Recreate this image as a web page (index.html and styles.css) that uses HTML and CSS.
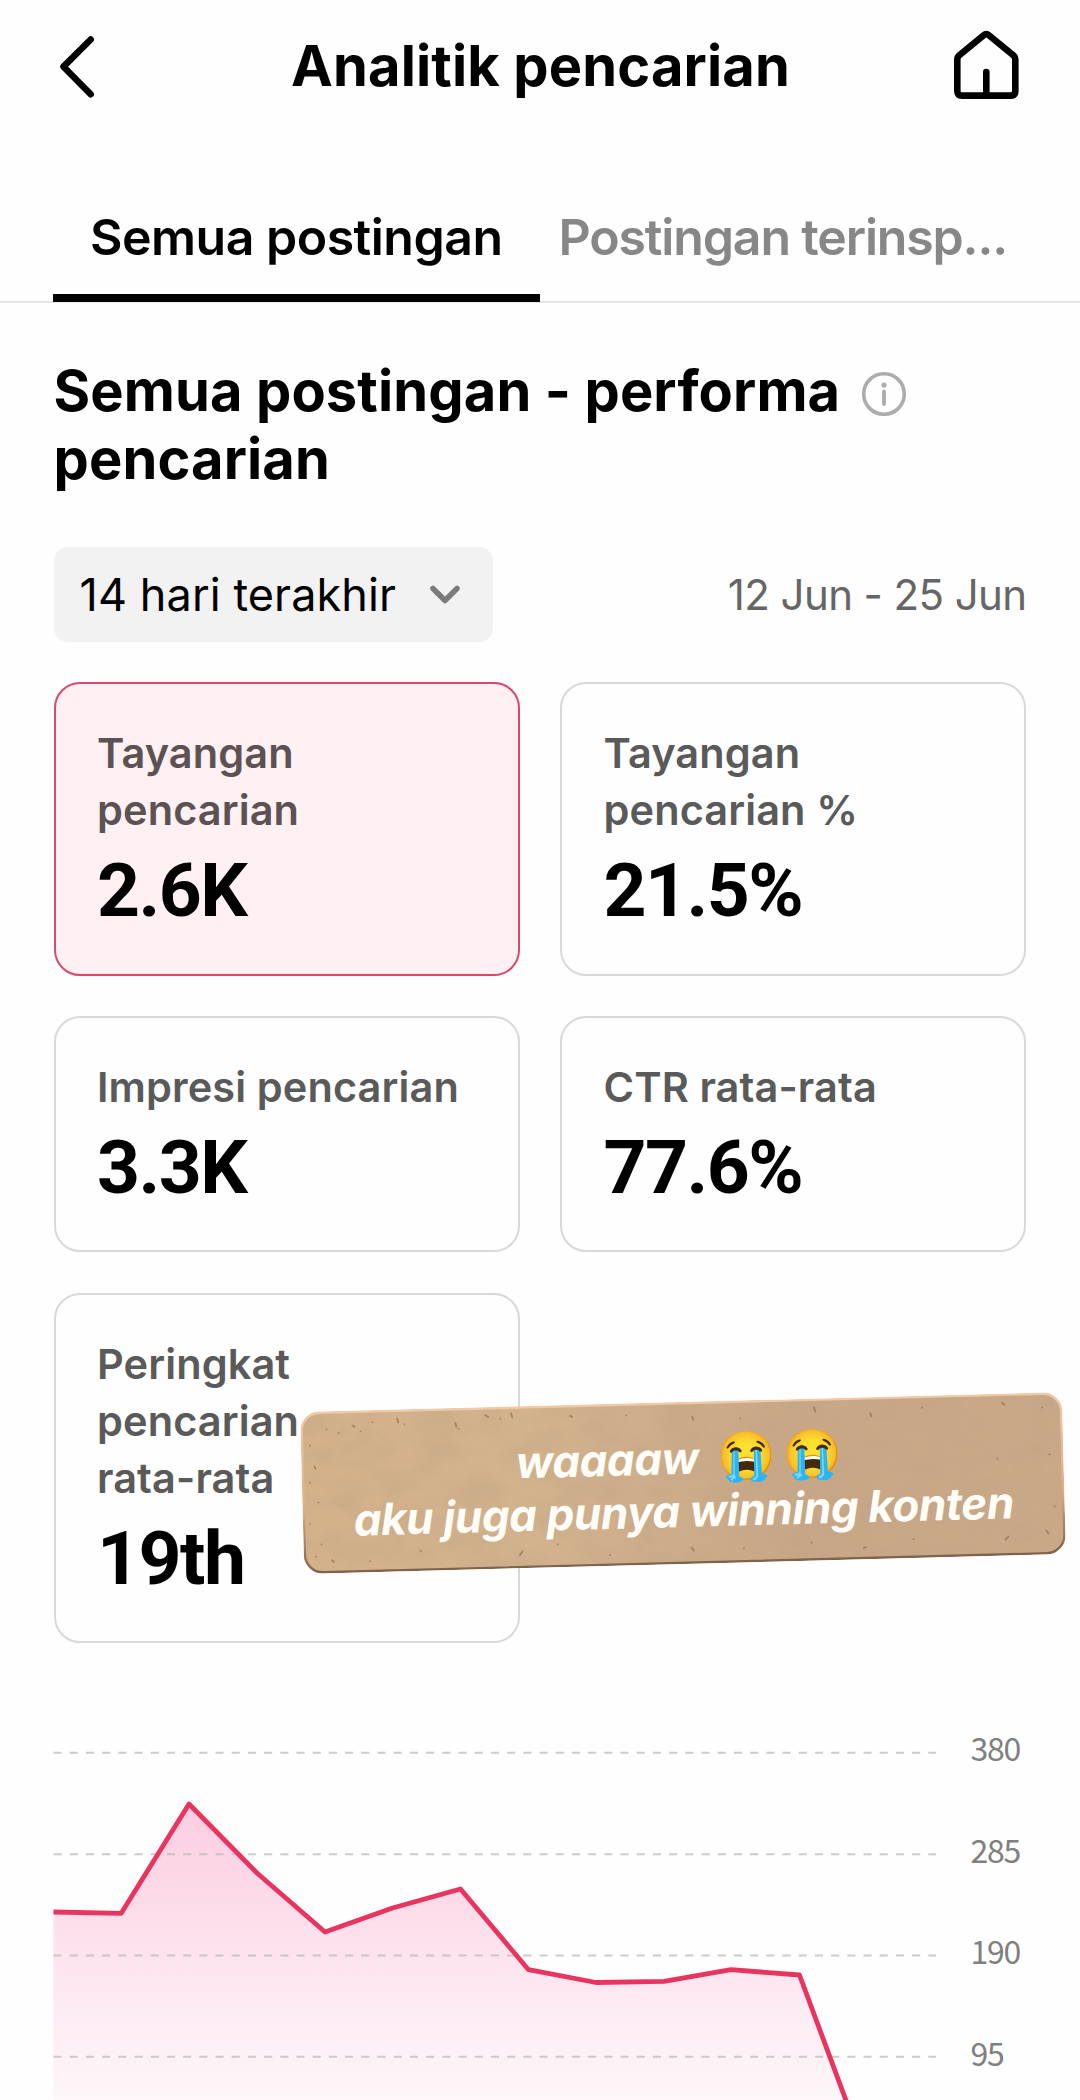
FILE: index.html
```
<!DOCTYPE html>
<html lang="id">
<head>
<meta charset="utf-8">
<title>Analitik pencarian</title>
<link rel="stylesheet" href="styles.css">
</head>
<body>
<header class="header">
  <svg class="header-icon" viewBox="0 0 80 80" fill="none" stroke="#000" stroke-width="6.6" stroke-linecap="round" stroke-linejoin="round"><path d="M54.700 13.500 27.500 40.700 54.700 68.200"/></svg>
  <h1 class="header-title">Analitik pencarian</h1>
  <svg class="header-icon" viewBox="0 0 80 80" fill="none" stroke="#000" stroke-width="6.6" stroke-linejoin="round"><path d="M42.900 9.300Q40.300 7.100 37.700 9.300L13.300 29.200Q11.300 30.900 11.300 33.500V65Q11.300 69.600 16.100 69.600H64.500Q69.300 69.600 69.300 65V33.500Q69.300 30.900 67.300 29.200Z"/><path d="M40.300 46V69" stroke-linecap="round"/></svg>
</header>
<nav class="tabs">
  <span class="tab tab-active">Semua postingan</span>
  <span class="tab tab-clipped">Postingan terinsp...</span>
</nav>
<main class="content">
  <h2 class="section-title">Semua postingan - performa
    <svg class="info" viewBox="0 0 46 46"><circle cx="23" cy="23" r="20.3" fill="none" stroke="#acacac" stroke-width="3.6"/><circle cx="23" cy="14" r="2.6" fill="#acacac"/><path d="M23 20.500V33" stroke="#acacac" stroke-width="3.8" stroke-linecap="round"/></svg><br>pencarian</h2>
  <div class="filters">
    <button class="period">14 hari terakhir
      <svg class="caret" viewBox="0 0 32 22" fill="none" stroke="#7b7b7b" stroke-width="5.5" stroke-linecap="round" stroke-linejoin="round"><path d="M4 4.500 16 16.500 28 4.500"/></svg>
    </button>
    <span class="dates">12 Jun - 25 Jun</span>
  </div>
  <section class="metrics">
    <article class="metric metric-selected"><span class="label">Tayangan pencarian</span><strong class="value">2.6K</strong></article>
    <article class="metric"><span class="label">Tayangan pencarian %</span><strong class="value">21.5%</strong></article>
    <article class="metric"><span class="label">Impresi pencarian</span><strong class="value">3.3K</strong></article>
    <article class="metric"><span class="label">CTR rata-rata</span><strong class="value">77.6%</strong></article>
    <article class="metric"><span class="label">Peringkat pencarian rata-rata</span><strong class="value">19th</strong></article>
  </section>
</main>
<svg class="chart" viewBox="0 1643 1080 457">
  <defs>
    <linearGradient id="area" gradientUnits="userSpaceOnUse" x1="0" y1="1804" x2="0" y2="2140">
      <stop offset="0" stop-color="#fbcde1"/><stop offset=".3" stop-color="#fddce9"/><stop offset=".6" stop-color="#fdebf3"/><stop offset="1" stop-color="#fffbfc"/>
    </linearGradient>
  </defs>
  <path fill="url(#area)" d="M53.500 1912 121.200 1913.300 189 1804.500 257 1873 325 1932 392.500 1908 460.500 1889 528.500 1969.700 596 1982.500 664 1981.300 731 1969.700 799.500 1975 864 2149H53.500Z"/>
  <g class="grid">
    <path d="M53.500 1752.700H936M53.500 1854.200H936M53.500 1955.500H936M53.500 2056.800H936"/>
  </g>
  <path class="line" d="M53.500 1912 121.200 1913.300 189 1804 257 1873 325 1932 392.500 1908 460.500 1889 528.500 1969.700 596 1982.500 664 1981.300 731 1969.700 799.500 1975 864 2149"/>
  <g class="ticks">
    <text x="970.500" y="1760.700">380</text><text x="970.500" y="1862.500">285</text><text x="970.500" y="1963.500">190</text><text x="970.500" y="2065.500">95</text>
  </g>
</svg>
<aside class="sticker">
  <svg class="paper" viewBox="0 0 762 162">
    <defs>
      <linearGradient id="kraft" x1="0" y1="0" x2="1" y2="0"><stop offset="0" stop-color="#d2b18b"/><stop offset=".3" stop-color="#d3b38e"/><stop offset=".65" stop-color="#c8a787"/><stop offset="1" stop-color="#caa988"/></linearGradient>
      <linearGradient id="rim" x1="0" y1="0" x2="0" y2="1"><stop offset="0" stop-color="#f3c8a6"/><stop offset=".6" stop-color="#dfae87"/><stop offset="1" stop-color="#80634c"/></linearGradient>
      <filter id="grain" x="0" y="0" width="1" height="1"><feTurbulence type="fractalNoise" baseFrequency=".025 .04" numOctaves="4" seed="4"/><feColorMatrix values="0 0 0 0 .5  0 0 0 0 .36  0 0 0 0 .22  .7 0 0 0 -.24"/><feComposite in2="SourceGraphic" operator="in"/></filter>
    </defs>
    <rect x="1" y="1" width="760" height="160" rx="18" fill="url(#kraft)"/>
    <rect x="1" y="1" width="760" height="160" rx="18" filter="url(#grain)"/>
    <rect x="1.200" y="1.200" width="759.600" height="159.600" rx="18" fill="none" stroke="url(#rim)" stroke-width="2.400"/>
    <g fill="none" stroke="#84664c" stroke-opacity=".6" stroke-width="1.800" stroke-linecap="round">
      <path d="M26 18h.1M38 22h.1M52 15l2 1M60 21h.1M72 12h.1M97 9l1 4M104 15h.1M155 15l1 4M158 21h.1M185 8l3 2M200 12h.1M211 7l1 4M270 11l2 1M326 12h.1M392 15l1 3M440 18h.1M514 9l1 4M570 16l1 3M622 12h.1M702 9l2 2M742 15h.1M9 34h.1M13 55l1 2M8 71h.1M16 91h.1M7 112h.1M18 133h.1M12 145h.1M28 149l2 2M66 151h.1M117 142h.1M219 145l-3 4M254 139h.1M306 151h.1M388 146l2 3M440 148h.1M508 144h.1M560 151l2-1M610 143h.1M702 146l3-3M743 138l2 3M752 114h.1M748 62h.1M696 65h.1M660 114h.1"/>
    </g>
  </svg>
  <p class="caption">waaaaw <span class="emoji">😭😭</span><br>aku juga punya winning konten</p>
</aside>
</body>
</html>
```
FILE: styles.css
```
* { box-sizing: border-box; }
body {
  margin: 0;
  width: 1080px;
  height: 2100px;
  overflow: hidden;
  position: relative;
  background: #fefefe;
  color: #000;
  font-family: Inter, "Liberation Sans", sans-serif;
}
svg { display: block; }
.header {
  height: 132px;
  padding: 0 54px 0 36px;
  display: flex;
  align-items: center;
}
.header-icon { width: 80px; height: 80px; }
.header-title {
  flex: 1;
  margin: 0;
  padding-left: 19px;
  text-align: center;
  font-size: 56px;
  font-weight: 700;
  line-height: 68px;
  letter-spacing: .15px;
}
.tabs {
  height: 171px;
  padding: 40px 54px 0 53px;
  display: grid;
  grid-template-columns: 1fr 1fr;
  border-bottom: 2px solid #e6e6e6;
}
.tab {
  position: relative;
  font-size: 50px;
  font-weight: 600;
  line-height: 130px;
  letter-spacing: -.5px;
  text-align: center;
  white-space: nowrap;
  color: #878787;
}
.tab-active { color: #000; }
.tab-clipped { letter-spacing: -1.15px; }
.tab-active::after {
  content: "";
  position: absolute;
  left: 0;
  right: 0;
  bottom: 0;
  height: 8px;
  background: #000;
}
.content { padding: 54px 53.5px 0; }
.section-title {
  margin: 0;
  font-size: 56px;
  font-weight: 700;
  line-height: 68px;
  letter-spacing: .12px;
}
.info {
  display: inline-block;
  width: 46px;
  height: 46px;
  margin-left: 7px;
  vertical-align: -6px;
}
.filters {
  margin-top: 54px;
  display: flex;
  align-items: center;
  justify-content: space-between;
}
.period {
  width: 439px;
  height: 95px;
  padding: 0 32px 0 26px;
  display: flex;
  align-items: center;
  justify-content: space-between;
  border: 0;
  border-radius: 14px;
  background: #f2f2f2;
  color: #000;
  font: 400 45px/60px Inter, "Liberation Sans", sans-serif;
  letter-spacing: .1px;
}
.caret { width: 32px; height: 22px; }
.dates { font-size: 42px; letter-spacing: -.6px; color: #666; }
.metrics {
  margin-top: 40px;
  display: grid;
  grid-template-columns: 466px 466px;
  gap: 40.3px 40.5px;
}
.metric {
  padding: 41px 41.5px 41.5px;
  display: flex;
  flex-direction: column;
  gap: 9px;
  border: 2px solid #d9d9d9;
  border-radius: 26px;
}
.metric-selected { border-color: #d9496d; background: #fef0f3; }
.metric-selected .label { color: #5c5254; }
.label {
  font-size: 41.5px;
  font-weight: 570;
  line-height: 57px;
  letter-spacing: .1px;
  color: #5a5a5a;
  max-width: 270px;
}
.metric:nth-child(n+3) .label { white-space: nowrap; }
.metric:nth-child(5) .label { white-space: normal; width: 220px; }
.value {
  font-family: Roboto, "Liberation Sans", sans-serif;
  font-size: 75px;
  font-weight: 700;
  line-height: 84px;
  letter-spacing: -1.5px;
}
.chart { width: 1080px; height: 457px; }
.grid { fill: none; stroke: #bbb; stroke-opacity: .75; stroke-width: 2; stroke-dasharray: 8.1 8.1; }
.line { fill: none; stroke: #e8345f; stroke-width: 4.8; stroke-linejoin: round; }
.ticks { font: 400 32px "Noto Sans CJK SC", sans-serif; letter-spacing: -1.2px; fill: #808080; }
.sticker {
  position: absolute;
  left: 302px;
  top: 1402px;
  width: 762px;
  height: 162px;
  transform: rotate(-1.5deg);
}
.paper { position: absolute; inset: 0; width: 762px; height: 162px; }
.caption {
  position: relative;
  margin: 0;
  padding-top: 30px;
  text-align: center;
  font-size: 44px;
  font-style: italic;
  font-weight: 700;
  line-height: 53px;
  letter-spacing: -.4px;
  white-space: nowrap;
  color: #fffdf8;
  font-feature-settings: "cv11";
}
.emoji {
  display: inline-block;
  margin-left: 8px;
  font-family: "Noto Color Emoji", sans-serif;
  font-size: 47.5px;
  font-style: normal;
  line-height: 50px;
  letter-spacing: 7px;
}
```
